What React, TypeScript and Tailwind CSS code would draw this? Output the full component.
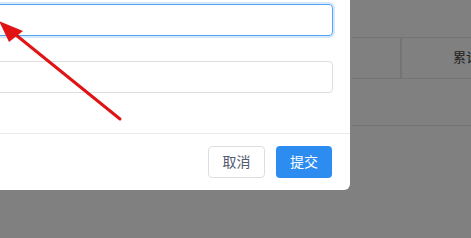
import React from 'react';

const App: React.FC = () => {
  return (
    <div
      className="relative w-[471px] h-[238px] overflow-hidden bg-[#808080]"
      style={{ fontFamily: '"Liberation Sans", "Noto Sans CJK SC", sans-serif' }}
    >
      {/* Table behind the mask */}
      <div className="pt-[37px] pl-[352px]">
        <div className="border-t border-b border-[#747474] h-[42px] flex">
          <div className="w-[50px] border-r-2 border-[#747474] mr-0"></div>
          <div className="flex-1 flex items-center justify-end pr-0">
            <span className="text-[13px] text-[#1f1f1f] -mr-[8px] whitespace-nowrap">累计</span>
          </div>
        </div>
        <div className="mt-[46px] border-t border-[#747474]"></div>
      </div>

      {/* Dialog */}
      <div className="absolute left-[-300px] top-[-40px] w-[650px] h-[230px] bg-white rounded-b-[6px] flex flex-col">
        <div className="pt-[44px] pr-[17px] pl-[200px] flex flex-col gap-[25px]">
          <div className="h-[32px] rounded-[4px] border border-[#57a3f3] shadow-[0_0_0_2px_rgba(45,140,240,0.2)]"></div>
          <div className="h-[32px] rounded-[4px] border border-[#dcdee2]"></div>
        </div>
        <div className="mt-[40px] border-t border-[#e8eaec] flex justify-end gap-[11px] pt-[12px] pr-[18px]">
          <button className="w-[57px] h-[32px] rounded-[4px] border border-[#dcdee2] bg-white text-[14px] text-[#515a6e]">
            取消
          </button>
          <button className="w-[56px] h-[32px] rounded-[4px] bg-[#2d8cf0] text-[14px] text-white">
            提交
          </button>
        </div>
      </div>

      {/* Red arrow annotation */}
      <svg className="absolute left-0 top-0" width="471" height="238" viewBox="0 0 471 238">
        <line x1="120" y1="119" x2="16" y2="35" stroke="#e01414" strokeWidth="3" strokeLinecap="round" />
        <polygon points="-1,21 23,31 9,42" fill="#e01414" />
      </svg>
    </div>
  );
};

export default App;
